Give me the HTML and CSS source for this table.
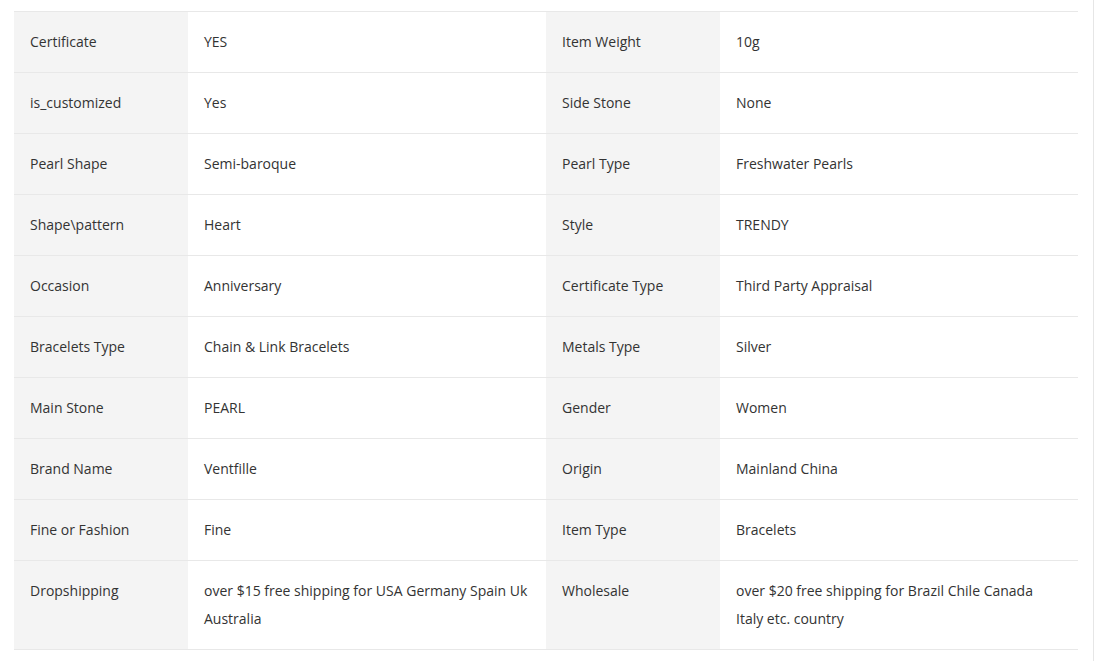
FILE: index.html
```html
<!DOCTYPE html>
<html>
<head>
<meta charset="utf-8">
<link rel="stylesheet" href="styles.css">
</head>
<body>
<div class="page">
  <table class="specs">
    <colgroup>
      <col class="c-label"><col class="c-value"><col class="c-label"><col class="c-value">
    </colgroup>
    <tbody>
      <tr><td class="label">Certificate</td><td class="value">YES</td><td class="label">Item Weight</td><td class="value">10g</td></tr>
      <tr><td class="label">is_customized</td><td class="value">Yes</td><td class="label">Side Stone</td><td class="value">None</td></tr>
      <tr><td class="label">Pearl Shape</td><td class="value">Semi-baroque</td><td class="label">Pearl Type</td><td class="value">Freshwater Pearls</td></tr>
      <tr><td class="label">Shape\pattern</td><td class="value">Heart</td><td class="label">Style</td><td class="value">TRENDY</td></tr>
      <tr><td class="label">Occasion</td><td class="value">Anniversary</td><td class="label">Certificate Type</td><td class="value">Third Party Appraisal</td></tr>
      <tr><td class="label">Bracelets Type</td><td class="value">Chain &amp; Link Bracelets</td><td class="label">Metals Type</td><td class="value">Silver</td></tr>
      <tr><td class="label">Main Stone</td><td class="value">PEARL</td><td class="label">Gender</td><td class="value">Women</td></tr>
      <tr><td class="label">Brand Name</td><td class="value">Ventfille</td><td class="label">Origin</td><td class="value">Mainland China</td></tr>
      <tr><td class="label">Fine or Fashion</td><td class="value">Fine</td><td class="label">Item Type</td><td class="value">Bracelets</td></tr>
      <tr><td class="label">Dropshipping</td><td class="value">over $15 free shipping for USA Germany Spain Uk Australia</td><td class="label">Wholesale</td><td class="value">over $20 free shipping for Brazil Chile Canada Italy etc. country</td></tr>
    </tbody>
  </table>
</div>
</body>
</html>
```

FILE: styles.css
```css
html, body {
  margin: 0;
  padding: 0;
  background: #fff;
}
body {
  font-family: "Open Sans", "Liberation Sans", sans-serif;
  font-size: 14px;
  color: #333;
}
.page {
  width: 1094px;
  min-height: 661px;
  border-right: 1px solid #e6e6e6;
  padding: 11px 0 0 14px;
  box-sizing: border-box;
}
.specs {
  width: 1064px;
  border-collapse: collapse;
  table-layout: fixed;
}
.c-label { width: 174px; }
.c-value { width: 358px; }
.specs td {
  padding: 16px 16px;
  line-height: 28px;
  vertical-align: top;
  border-top: 1px solid #e8e8e8;
  border-bottom: 1px solid #e8e8e8;
  text-align: left;
}
.specs td.label {
  background: #f4f4f4;
}
.specs td.value {
  background: #fff;
}
```
